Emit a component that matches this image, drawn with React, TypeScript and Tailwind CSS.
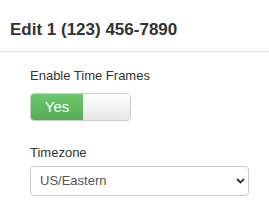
import { useState } from "react";

export default function App(): JSX.Element {
  const [enabled, setEnabled] = useState(true);
  const [tz, setTz] = useState("US/Eastern");

  return (
    <div className="h-[211px] w-[269px] bg-white text-[#333] [font-family:'Liberation_Sans',Arial,sans-serif]">
      <header className="border-b border-[#e5e5e5] px-[10px] pt-[21px] pb-[12px]">
        <h1 className="text-[17px] font-bold leading-[18px]">Edit 1 (123) 456-7890</h1>
      </header>
      <main className="px-[30px] pt-[16px]">
        <label className="block text-[13px] leading-[15px]">Enable Time Frames</label>
        <button
          type="button"
          onClick={() => setEnabled((v) => !v)}
          className="mt-[10px] flex h-[28px] w-[101px] overflow-hidden rounded-[4px] border border-[#ccc]"
        >
          <span className="flex h-full w-[52px] items-center justify-center bg-gradient-to-b from-[#6cc76c] to-[#55ad55] text-[15px] text-white">
            {enabled ? "Yes" : ""}
          </span>
          <span className="h-full flex-1 bg-gradient-to-b from-[#fff] to-[#e6e6e6]" />
        </button>
        <label className="mt-[24px] block text-[13px] leading-[15px]">Timezone</label>
        <div className="relative mt-[6px]">
          <select
            value={tz}
            onChange={(e) => setTz(e.target.value)}
            className="h-[30px] w-[219px] appearance-none rounded-[4px] border border-[#ccc] bg-white pl-[9px] text-[13px] text-[#555] outline-none"
          >
            <option>US/Eastern</option>
            <option>US/Central</option>
            <option>US/Mountain</option>
            <option>US/Pacific</option>
          </select>
          <svg
            className="pointer-events-none absolute left-[206px] top-[12px]"
            width="9"
            height="6"
            viewBox="0 0 9 6"
          >
            <path d="M1 1l3.5 3.5L8 1" fill="none" stroke="#333" strokeWidth="1.8" />
          </svg>
        </div>
      </main>
    </div>
  );
}
